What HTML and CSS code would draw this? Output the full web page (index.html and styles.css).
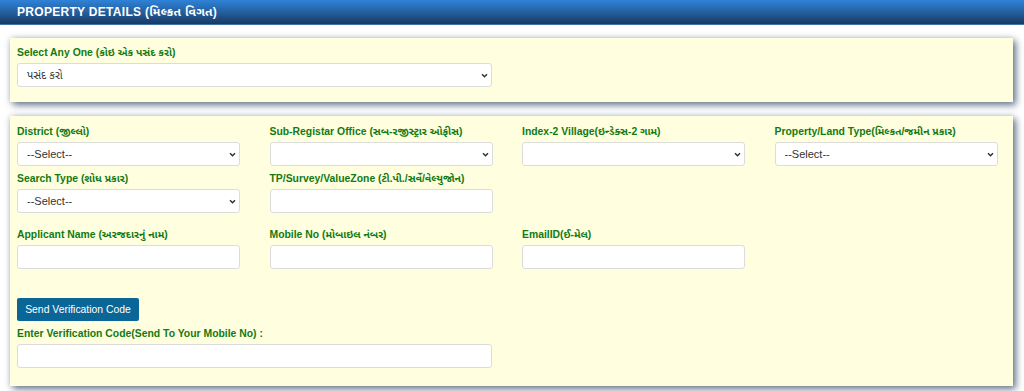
FILE: index.html
```html
<!DOCTYPE html>
<html lang="gu">
<head>
<meta charset="utf-8">
<title>Property Details</title>
<link rel="stylesheet" href="styles.css">
</head>
<body>
<div class="header">PROPERTY DETAILS (મિલ્કત વિગત)</div>
<div class="content">
  <section class="card card-top">
    <div class="field wide">
      <label class="lbl">Select Any One (કોઇ એક પસંદ કરો)</label>
      <select class="ctl"><option>પસંદ કરો</option></select>
    </div>
  </section>
  <section class="card card-main">
    <div class="grid">
      <div class="field">
        <label class="lbl">District (જીલ્લો)</label>
        <select class="ctl"><option>--Select--</option></select>
      </div>
      <div class="field">
        <label class="lbl">Sub-Registar Office (સબ-રજીસ્ટ્રાર ઓફીસ)</label>
        <select class="ctl"><option></option></select>
      </div>
      <div class="field">
        <label class="lbl">Index-2 Village(ઇન્ડેક્સ-2 ગામ)</label>
        <select class="ctl"><option></option></select>
      </div>
      <div class="field">
        <label class="lbl">Property/Land Type(મિલ્કત/જમીન પ્રકાર)</label>
        <select class="ctl"><option>--Select--</option></select>
      </div>
    </div>
    <div class="grid row2">
      <div class="field">
        <label class="lbl">Search Type (શોધ પ્રકાર)</label>
        <select class="ctl"><option>--Select--</option></select>
      </div>
      <div class="field">
        <label class="lbl">TP/Survey/ValueZone (ટી.પી./સર્વે/વેલ્યુજોન)</label>
        <input class="ctl" type="text">
      </div>
    </div>
    <div class="grid row3">
      <div class="field">
        <label class="lbl">Applicant Name (અરજદારનું નામ)</label>
        <input class="ctl" type="text">
      </div>
      <div class="field">
        <label class="lbl">Mobile No (મોબાઇલ નંબર)</label>
        <input class="ctl" type="text">
      </div>
      <div class="field">
        <label class="lbl">EmailID(ઈ-મેલ)</label>
        <input class="ctl" type="text">
      </div>
    </div>
    <button class="btn" type="button">Send Verification Code</button>
    <div class="field wide verify">
      <label class="lbl">Enter Verification Code(Send To Your Mobile No) :</label>
      <input class="ctl" type="text">
    </div>
  </section>
</div>
</body>
</html>
```

FILE: styles.css
```css
html, body {
  margin: 0;
  padding: 0;
  background: #ffffff;
  font-family: "Liberation Sans", Arial, "Noto Sans Gujarati", sans-serif;
}

.header {
  height: 25px;
  box-sizing: border-box;
  padding-left: 17px;
  line-height: 24px;
  color: #ffffff;
  font-weight: bold;
  font-size: 12px;
  letter-spacing: 0.3px;
  background: linear-gradient(to bottom, #2f82d8 0%, #24609f 50%, #173a63 100%);
  border-bottom: 1px solid #3f74a3;
}

.content {
  padding: 13px 11px 5px 10px;
}

.card {
  background: #ffffe0;
  box-shadow: 3px 3px 7px rgba(60, 80, 110, 0.75), 0 0 6px rgba(120, 135, 160, 0.35);
  box-sizing: border-box;
}

.card-top {
  height: 64px;
  padding: 6px 15px 0 7px;
}

.card-main {
  margin-top: 14px;
  height: 270px;
  padding: 7px 15px 0 7px;
}

.grid {
  display: grid;
  grid-template-columns: repeat(4, 223px);
  column-gap: 29.5px;
}

.row2 { margin-top: 4px; }
.row3 { margin-top: 13px; }

.field {
  display: flex;
  flex-direction: column;
}

.wide { width: 475px; }

.lbl {
  color: #137a13;
  font-weight: bold;
  font-size: 10.4px;
  line-height: 17px;
  height: 17px;
  white-space: nowrap;
  margin-bottom: 2px;
}

.ctl {
  height: 24px;
  box-sizing: border-box;
  border: 1px solid #dcdcdc;
  border-radius: 3px;
  background-color: #ffffff;
  font-family: "Liberation Sans", Arial, "Noto Sans Gujarati", sans-serif;
  font-size: 11px;
  color: #333;
  padding: 0 9px;
  margin: 0;
}

select.ctl {
  appearance: none;
  -webkit-appearance: none;
  background-image: url("data:image/svg+xml,%3Csvg xmlns='http://www.w3.org/2000/svg' width='7' height='5' viewBox='0 0 7 5'%3E%3Cpath d='M1 1.2 L3.5 3.7 L6 1.2' fill='none' stroke='%23333' stroke-width='1.5'/%3E%3C/svg%3E");
  background-repeat: no-repeat;
  background-position: right 3px center;
  background-size: 7px 5px;
}

.btn {
  display: block;
  margin-top: 29px;
  width: 122px;
  height: 23px;
  border: none;
  border-radius: 2px;
  background: #0b6698;
  color: #ffffff;
  font-family: "Liberation Sans", Arial, sans-serif;
  font-size: 10.4px;
  padding: 0;
  text-align: center;
}

.verify { margin-top: 4px; }
```
